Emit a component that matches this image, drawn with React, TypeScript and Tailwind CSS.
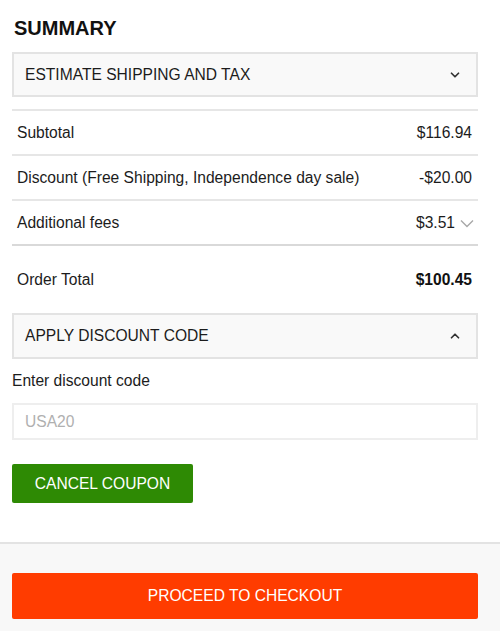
import { ChevronDown, ChevronUp } from "lucide-react";

function Row({ label, value, chevron }: { label: string; value: string; chevron?: boolean }) {
  return (
    <div className="flex items-center justify-between h-[45px] pl-[5px] pr-[6px] border-t-2 border-[#e6e6e6]">
      <span className="text-[15.6px] text-[#1c1c1c]">{label}</span>
      <span className="flex items-center gap-[5px] text-[15.6px] text-[#1c1c1c]">
        {value}
        {chevron && (
          <svg width="14" height="9" viewBox="0 0 14 9" className="mt-[2px] -mr-[2px]">
            <polyline points="1,1.5 7,7.5 13,1.5" fill="none" stroke="#a8a8a8" strokeWidth="1.4" />
          </svg>
        )}
      </span>
    </div>
  );
}

export default function App() {
  return (
    <div className="w-[500px] h-[631px] bg-white flex flex-col font-['Liberation_Sans',Arial,sans-serif] text-[#222]">
      <div className="pl-3 pr-[22px] pt-[17px]">
        <h2 className="text-[20px] font-bold text-[#111] leading-[22px] ml-[2px]">SUMMARY</h2>
        <button className="mt-[13px] w-full h-[45px] flex items-center justify-between bg-[#f9f9f9] border-2 border-[#e3e3e3] pl-[11px] pr-[14px] text-[15.6px] text-[#1c1c1c]">
          <span>ESTIMATE SHIPPING AND TAX</span>
          <ChevronDown className="w-[14px] h-[14px] text-[#333]" strokeWidth={3} />
        </button>
        <div className="mt-[12px]">
          <Row label="Subtotal" value="$116.94" />
          <Row label="Discount (Free Shipping, Independence day sale)" value="-$20.00" />
          <Row label="Additional fees" value="$3.51" chevron />
          <div className="flex items-center justify-between h-[69px] pl-[5px] pr-[6px] border-t-2 border-[#d9d9d9]">
            <span className="text-[15.6px] text-[#1c1c1c]">Order Total</span>
            <span className="text-[15.6px] font-bold text-[#111]">$100.45</span>
          </div>
        </div>
        <button className="w-full h-[46px] flex items-center justify-between bg-[#f9f9f9] border-2 border-[#e3e3e3] pl-[11px] pr-[14px] text-[15.6px] text-[#1c1c1c]">
          <span>APPLY DISCOUNT CODE</span>
          <ChevronUp className="w-[14px] h-[14px] text-[#333]" strokeWidth={3} />
        </button>
        <label className="block mt-[14px] text-[15.6px] text-[#1c1c1c] leading-[16px]">Enter discount code</label>
        <input
          readOnly
          placeholder="USA20"
          className="mt-[14px] w-full h-[37px] border-2 border-[#eeeeee] px-[11px] text-[15.6px] text-[#aaa] placeholder:text-[#b0b0b0] outline-none"
        />
        <button className="mt-[24px] w-[181px] h-[39px] bg-[#2e8a04] rounded-[2px] text-white text-[15.6px] flex items-center justify-center">
          CANCEL COUPON
        </button>
      </div>
      <div className="mt-auto h-[89px] border-t-2 border-[#e3e3e3] bg-[#f8f8f8] pl-3 pr-[22px] pt-[29px]">
        <button className="w-full h-[46px] bg-[#ff3c00] rounded-[2px] text-white text-[15.6px] flex items-center justify-center">
          PROCEED TO CHECKOUT
        </button>
      </div>
    </div>
  );
}
